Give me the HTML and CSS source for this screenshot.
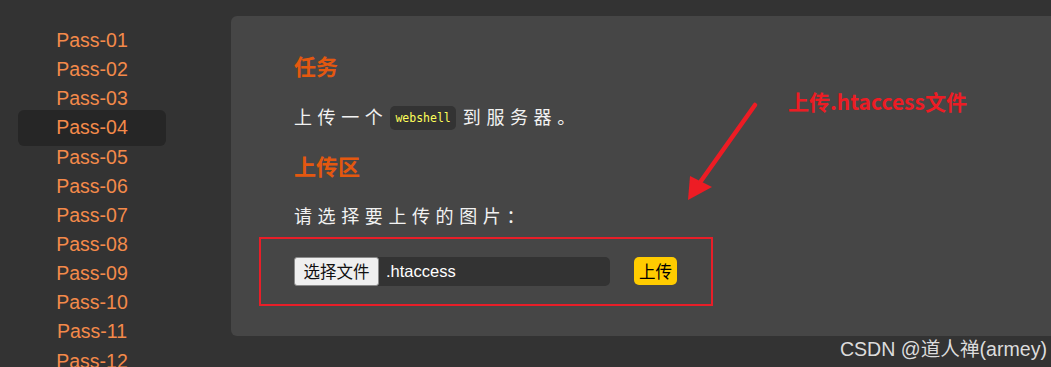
FILE: index.html
```html
<!DOCTYPE html>
<html lang="zh-CN">
<head>
<meta charset="utf-8">
<title>Upload Labs</title>
<link rel="stylesheet" href="styles.css">
</head>
<body>
<div class="layout">
  <nav class="sidebar">
    <ul class="menu">
      <li>Pass-01</li>
      <li>Pass-02</li>
      <li>Pass-03</li>
      <li class="active">Pass-04</li>
      <li>Pass-05</li>
      <li>Pass-06</li>
      <li>Pass-07</li>
      <li>Pass-08</li>
      <li>Pass-09</li>
      <li>Pass-10</li>
      <li>Pass-11</li>
      <li>Pass-12</li>
    </ul>
  </nav>
  <main class="panel">
    <h2 class="title">任务</h2>
    <p class="text first">上传一个<code class="code">webshell</code>到服务器。</p>
    <h2 class="title second">上传区</h2>
    <p class="text">请选择要上传的图片：</p>
    <form class="upload">
      <div class="file">
        <span class="file-btn">选择文件</span>
        <span class="file-name">.htaccess</span>
      </div>
      <span class="submit">上传</span>
    </form>
    <svg class="arrow" width="120" height="110" viewBox="0 0 120 110">
      <line x1="74" y1="9" x2="20" y2="85" stroke="#ed1c24" stroke-width="4.5" stroke-linecap="round"/>
      <polygon points="7,104 9,80 31,91" fill="#ed1c24"/>
    </svg>
    <div class="note">上传.htaccess文件</div>
  </main>
</div>
<div class="watermark">CSDN @道人禅(armey)</div>
</body>
</html>
```
FILE: styles.css
```css
html, body {
  margin: 0;
  padding: 0;
}
body {
  background: #333333;
  font-family: "Liberation Sans", "Noto Sans CJK SC", sans-serif;
  width: 1051px;
  height: 367px;
  overflow: hidden;
  position: relative;
}
.layout {
  display: flex;
  align-items: flex-start;
}
.sidebar {
  width: 148px;
  padding: 26px 0 0 18px;
  margin-right: 65px;
}
.menu {
  list-style: none;
  margin: 0;
  padding: 0;
}
.menu li {
  height: 29.15px;
  line-height: 29.15px;
  font-size: 19.5px;
  color: #f48a4a;
  text-align: center;
  border-radius: 6px;
}
.menu li.active {
  background: #262626;
  padding: 3px 0;
  margin: -3px 0;
}
.panel {
  position: relative;
  flex: 1;
  margin-top: 16px;
  margin-right: -20px;
  background: #464646;
  border-radius: 6px;
  height: 320px;
  box-sizing: border-box;
  padding: 34px 0 0 63px;
}
.title {
  margin: 0;
  height: 30px;
  line-height: 30px;
  font-size: 22px;
  font-weight: bold;
  color: #e4580f;
  font-family: "Noto Sans CJK SC", sans-serif;
}
.title.second {
  margin-top: 19px;
}
.text {
  margin: 19.5px 0 0;
  height: 30px;
  line-height: 30px;
  font-size: 18px;
  letter-spacing: 5.6px;
  color: #f2f2f2;
  font-family: "Noto Sans CJK SC", sans-serif;
}
.text.first {
  margin-top: 21px;
}
.code {
  display: inline-block;
  vertical-align: middle;
  margin: -3px 7px 0 2px;
  padding: 0 5px;
  height: 24px;
  line-height: 24px;
  background: #333333;
  border-radius: 5px;
  color: #ffff5a;
  font-family: "DejaVu Sans Mono", monospace;
  font-size: 11.5px;
  letter-spacing: 0;
}
.upload {
  margin: 7px 0 0 -35px;
  width: 454px;
  height: 69px;
  box-sizing: border-box;
  border: 2px solid #e81e28;
  display: flex;
  align-items: center;
  padding-left: 33px;
}
.file {
  display: flex;
  width: 316px;
  height: 29px;
  background: #333333;
  border-radius: 5px;
  align-items: center;
}
.file-btn {
  box-sizing: border-box;
  width: 85px;
  height: 29px;
  line-height: 27px;
  text-align: center;
  background: #efefef;
  border: 1px solid #8a8a8a;
  border-radius: 3px;
  color: #111;
  font-size: 16.5px;
  font-family: "Noto Sans CJK SC", sans-serif;
}
.file-name {
  color: #ffffff;
  font-size: 16.5px;
  padding-left: 7px;
}
.submit {
  margin-left: 24px;
  width: 43px;
  height: 28px;
  line-height: 28px;
  text-align: center;
  background: #ffcc00;
  border-radius: 5px;
  color: #000;
  font-size: 16.5px;
  font-family: "Noto Sans CJK SC", sans-serif;
}
.arrow {
  position: absolute;
  left: 450px;
  top: 80px;
}
.note {
  position: absolute;
  left: 557px;
  top: 70px;
  line-height: 30px;
  font-size: 21px;
  font-weight: bold;
  color: #ed1c24;
  font-family: "Noto Sans CJK SC", sans-serif;
}
.watermark {
  position: absolute;
  right: 4px;
  bottom: 6px;
  font-size: 19.6px;
  line-height: 24px;
  color: #dcdcdc;
  font-family: "Liberation Sans", "Noto Sans CJK SC", sans-serif;
}
```
